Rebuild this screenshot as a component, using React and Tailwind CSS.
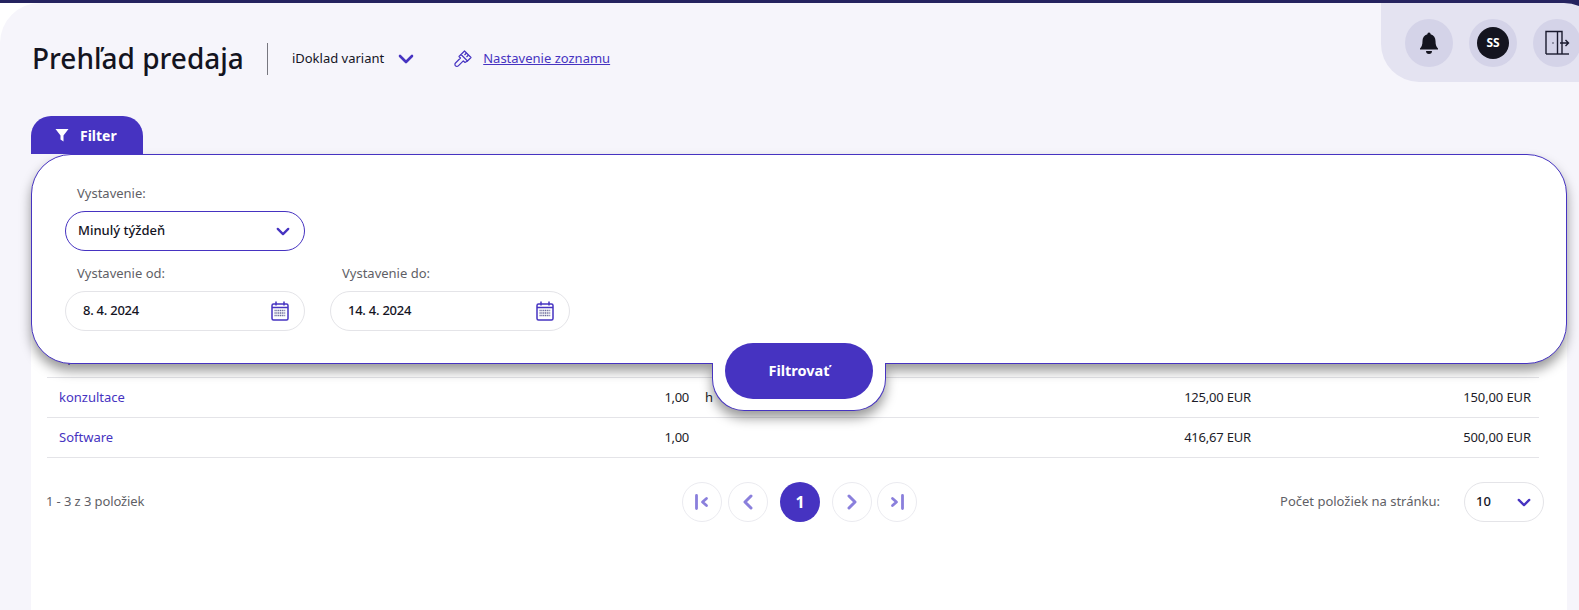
import { ChevronLeft, ChevronRight } from 'lucide-react';

const FONT = 'font-["Noto_Sans",sans-serif]';

const Chevron = ({ className }) => (
  <svg viewBox="0 0 16 10" fill="none" className={className}>
    <path d="M2 2l6 6 6-6" stroke="currentColor" strokeWidth="2.6" strokeLinecap="round" strokeLinejoin="round" />
  </svg>
);

const Brush = () => (
  <svg viewBox="0 0 18 18" fill="none" stroke="#4633c1" strokeWidth="1.2" strokeLinejoin="round" className="w-[18px] h-[18px]">
    <path d="M10.500 1l6.500 6.500-3.500 3.500L7 4.500z" />
    <path d="M12.500 3l-2 2M14.500 5l-2 2" />
    <path d="M7 4.500L5 6.500l1.500 1.500-5 5a1.500 1.500 0 002.800 2.800l5-5L11 12.500l2.500-1.500" />
  </svg>
);

const Calendar = () => (
  <svg viewBox="0 0 18 20" fill="none" className="w-[18px] h-[20px]">
    <rect x="1" y="3" width="16" height="16" rx="1.500" stroke="#4633c1" strokeWidth="1.500" />
    <path d="M1 6.500h16" stroke="#4633c1" strokeWidth="1.500" />
    <path d="M5 .5v4M13 .5v4" stroke="#4633c1" strokeWidth="1.500" />
    <path d="M3.500 9.500h11M3.500 12h11M3.500 14.500h11" stroke="#6a6a9a" strokeWidth="1.500" strokeDasharray="1.200 .6" />
  </svg>
);

const Door = () => (
  <svg viewBox="0 0 26 26" fill="none" stroke="#1a1a2e" strokeWidth="1.400" className="w-[26px] h-[26px]">
    <path d="M2 24V1.500h16V24" />
    <path d="M13.500 2v22" />
    <path d="M2 24h23" />
    <path d="M16 13h8.500M21.500 10l3 3-3 3" />
    <circle cx="9" cy="13" r=".7" fill="#1a1a2e" stroke="none" />
  </svg>
);

const PageButton = ({ children }) => (
  <div className="w-10 h-10 rounded-full border border-[#ebebf0] flex items-center justify-center text-[#8a7fdc]">
    {children}
  </div>
);

const Field = ({ label, value }) => (
  <div>
    <div className="text-[13px] leading-[18px] text-[#5f5f66] pl-3">{label}</div>
    <div className="mt-[9px] h-10 w-[240px] rounded-[20px] border border-[#e4e4e8] bg-white flex items-center justify-between pl-[17px] pr-[15px]">
      <span className="text-[13px] font-medium text-[#14141f] tracking-[-0.25px]">{value}</span>
      <Calendar />
    </div>
  </div>
);

const Row = ({ name, qty, unit, price, total }) => (
  <div className="h-10 border-b border-[#e4e4e8] flex items-center text-[13px] text-[#1c1c28]">
    <span className="w-[572px] pl-3 text-[#4633c1]">{name}</span>
    <span className="w-[70px] text-right tracking-[-0.3px]">{qty}</span>
    <span className="w-[16px] ml-[16px]">{unit}</span>
    <span className="w-[530px] text-right tracking-[-0.2px]">{price}</span>
    <span className="flex-1 text-right pr-2 tracking-[-0.1px]">{total}</span>
  </div>
);

export default function App() {
  return (
    <div className={`${FONT} relative w-[1579px] h-[610px] overflow-hidden bg-white`}>
      <div className="h-[3px] bg-[#25235f]" />
      <div className="h-[607px] rounded-tl-[40px] bg-[#f6f5fb] flex flex-col">
        <div className="flex items-center h-[113px] pl-8 pb-[1px] shrink-0">
          <h1 className="text-[28px] font-medium text-[#14141f] leading-none -mt-[3px]">Prehľad predaja</h1>
          <div className="ml-[23px] mr-6 w-px h-8 bg-[#77777f]" />
          <span className="text-[13px] text-[#14141f]">iDoklad variant</span>
          <Chevron className="ml-[14px] w-[16px] h-[10px] text-[#4633c1]" />
          <span className="ml-[40px]"><Brush /></span>
          <a className="ml-[11px] text-[13px] text-[#4633c1] underline">Nastavenie zoznamu</a>
        </div>

        <div className="relative z-20 ml-[31px] w-[112px] h-[38px] rounded-t-[20px] bg-[#4633c1] flex items-center pl-[24px] gap-[11px] text-white text-[14px] font-bold shrink-0">
          <svg viewBox="0 0 14 14" className="w-[14px] h-[14px]" fill="white">
            <path d="M0.500 1h13L8.500 7.500V13.500L5.500 11.500V7.500z" />
          </svg>
          Filter
        </div>

        <div className="ml-[31px] mr-3 flex-1 min-h-0 relative flex flex-col">
          <div className="relative z-10 h-[210px] shrink-0 rounded-[40px] border border-[#4633c1] bg-white shadow-[0_7px_12px_rgba(0,0,0,0.4)] pl-[33px] pt-[29px]">
            <div className="text-[13px] leading-[18px] text-[#5f5f66] pl-3">Vystavenie:</div>
            <div className="mt-[9px] h-10 w-[240px] rounded-[20px] border border-[#4633c1] flex items-center justify-between pl-3 pr-[14px]">
              <span className="text-[13px] font-medium text-[#14141f]">Minulý týždeň</span>
              <Chevron className="w-[14px] h-[9px] text-[#4633c1]" />
            </div>
            <div className="mt-[13px] flex gap-[25px]">
              <Field label="Vystavenie od:" value="8. 4. 2024" />
              <Field label="Vystavenie do:" value="14. 4. 2024" />
            </div>
          </div>

          <div className="absolute z-20 left-[681px] top-[189px] w-[174px] h-[68px] flex justify-center">
            <div className="absolute inset-0 top-[20px] rounded-b-[32px] border border-t-0 border-[#4633c1] bg-white shadow-[0_7px_12px_rgba(0,0,0,0.4)] [clip-path:inset(0_-30px_-30px_-30px)]" />
            <button className="relative w-[148px] h-14 rounded-[28px] bg-[#4633c1] text-white text-[14.5px] font-bold">Filtrovať</button>
          </div>

          <div className="flex-1 -mt-[60px] pt-[34px] pl-4 pr-7 bg-white">
            <Row name="Aplikácia" qty="" unit="" price="" total="" />
            <Row name="konzultace" qty="1,00" unit="h" price="125,00 EUR" total="150,00 EUR" />
            <Row name="Software" qty="1,00" unit="" price="416,67 EUR" total="500,00 EUR" />

            <div className="mt-[24px] flex items-center justify-between h-10 relative text-[13px] text-[#5f5f66]">
              <span className="tracking-[-0.1px] -ml-[1px]">1 - 3 z 3 položiek</span>
              <div className="absolute left-[635px] top-0 flex items-center">
                <PageButton>
                  <svg viewBox="0 0 18 18" fill="none" stroke="currentColor" strokeWidth="2.800" strokeLinecap="round" strokeLinejoin="round" className="w-[18px] h-[18px]">
                    <path d="M3.500 2.500v13M13.500 5.500L9.500 9l4 3.500" />
                  </svg>
                </PageButton>
                <div className="ml-[6px]"><PageButton><ChevronLeft size={24} strokeWidth={3} /></PageButton></div>
                <div className="ml-3 w-10 h-10 rounded-full bg-[#4633c1] text-white font-bold text-[16px] flex items-center justify-center">1</div>
                <div className="ml-3"><PageButton><ChevronRight size={24} strokeWidth={3} /></PageButton></div>
                <div className="ml-[5px]">
                  <PageButton>
                    <svg viewBox="0 0 18 18" fill="none" stroke="currentColor" strokeWidth="2.800" strokeLinecap="round" strokeLinejoin="round" className="w-[18px] h-[18px]">
                      <path d="M14.500 2.500v13M4.500 5.500L8.500 9l-4 3.500" />
                    </svg>
                  </PageButton>
                </div>
              </div>
              <div className="flex items-center gap-6 -mr-[5px]">
                <span>Počet položiek na stránku:</span>
                <div className="w-20 h-10 rounded-[20px] border border-[#e4e4e8] flex items-center justify-between pl-[11px] pr-[12px] text-[#14141f] font-medium">
                  10
                  <Chevron className="w-[14px] h-[9px] text-[#4633c1]" />
                </div>
              </div>
            </div>
          </div>
        </div>
      </div>

      <div className="absolute top-0 right-0 w-5 h-2 bg-[#25235f]" />
      <div className="absolute top-[3px] -right-[25px] w-[223px] h-[79px] bg-[#e4e3f1] rounded-bl-[38px] rounded-tr-[40px] flex items-center gap-4 pl-[24px]">
        <div className="w-12 h-12 rounded-full bg-[#d4d3e8] flex items-center justify-center shrink-0">
          <svg viewBox="0 0 24 24" className="w-[24px] h-[24px]" fill="#14141f">
            <path d="M12 1.500a1.600 1.600 0 011.600 1.700c3.300.7 4.900 3.500 4.900 6.800 0 4 1 6 2.500 7.500v1H3v-1C4.500 16 5.500 14 5.500 10c0-3.300 1.600-6.100 4.900-6.800A1.600 1.600 0 0112 1.500zM9 20h6a3 3 0 01-6 0z" />
          </svg>
        </div>
        <div className="w-12 h-12 rounded-full bg-[#d4d3e8] flex items-center justify-center shrink-0">
          <div className="w-8 h-8 rounded-full bg-[#14141f] text-white text-[12px] font-bold flex items-center justify-center">SS</div>
        </div>
        <div className="w-12 h-12 rounded-full bg-[#d4d3e8] flex items-center justify-center shrink-0">
          <Door />
        </div>
      </div>
    </div>
  );
}
